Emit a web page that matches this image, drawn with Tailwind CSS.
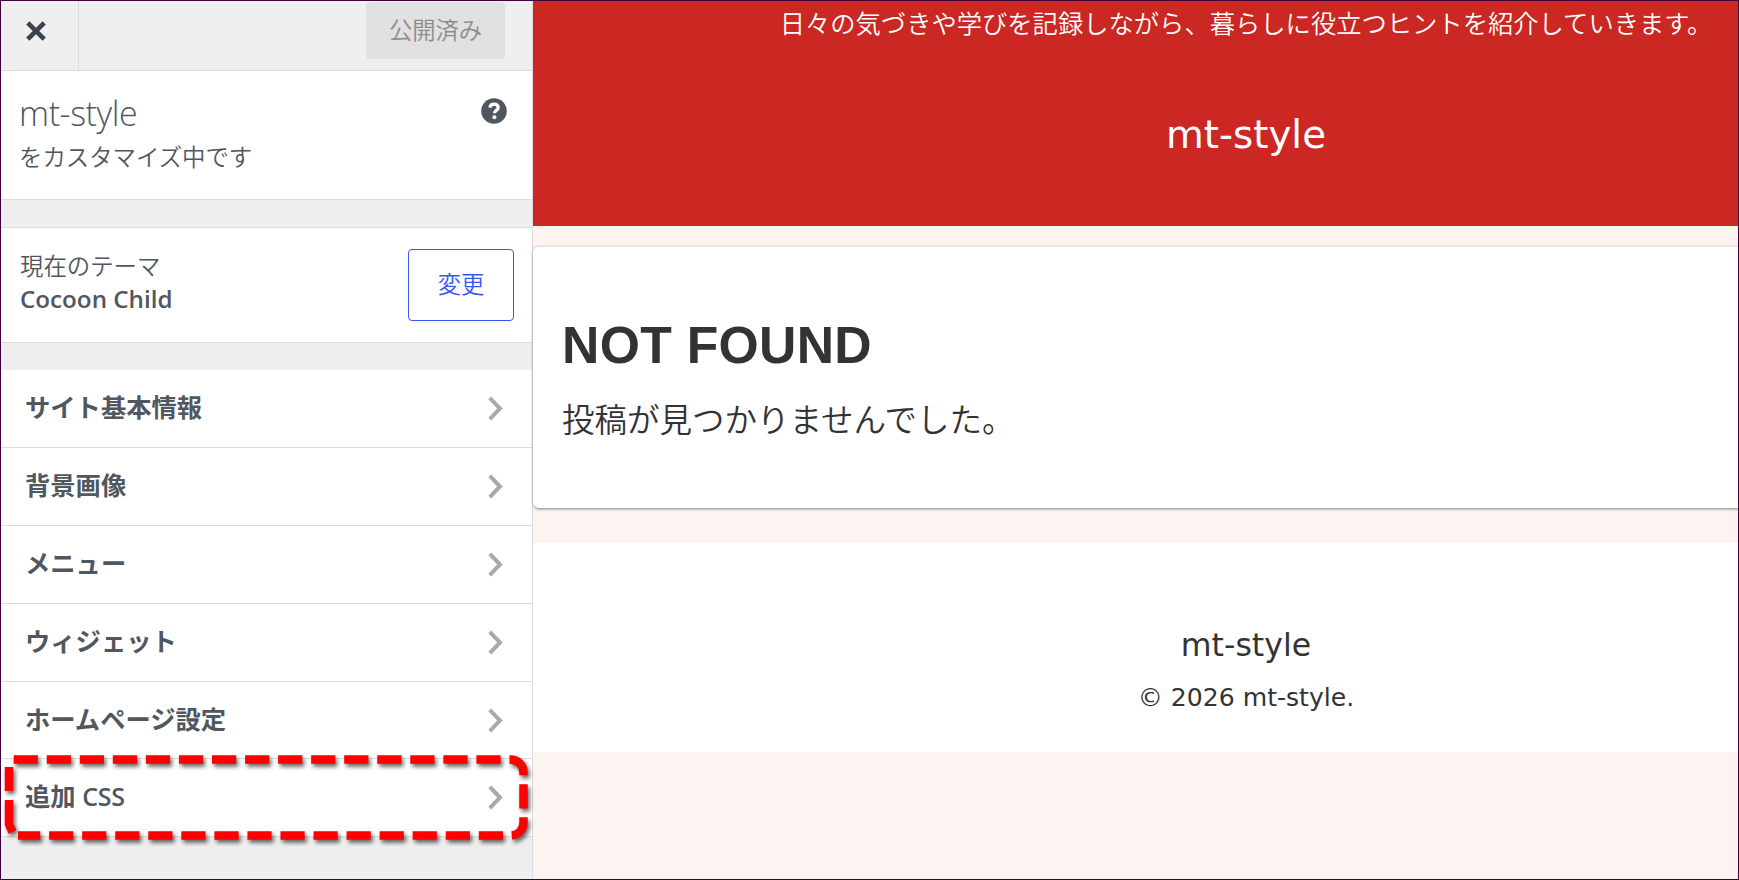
<!DOCTYPE html>
<html lang="ja">
<head>
    <meta charset="UTF-8">
    <meta name="viewport" content="width=device-width, initial-scale=1.0">
    <title>カスタマイズ: mt-style</title>
    <script src="https://cdn.jsdelivr.net/npm/@tailwindcss/browser@4"></script>
</head>
<body class="h-[880px] overflow-hidden">
<div class="relative flex h-[880px] w-[1739px] overflow-hidden border border-[#400040] font-['Open_Sans','Noto_Sans_CJK_JP',sans-serif] text-[#50575e]">

    <!-- Customizer sidebar -->
    <aside class="flex w-[532px] shrink-0 flex-col border-r border-[#dcdcde] bg-[#efefef]">
        <header class="flex h-[70px] shrink-0 items-start justify-between border-b border-[#dcdcde]">
            <button class="flex h-[69px] w-[78px] items-center justify-center border-r border-[#dcdcde] pr-[7px] pb-[9px]">
                <svg class="h-5 w-5" viewBox="0 0 20 20" fill="none" stroke="#3c434a" stroke-width="4.6"><path d="M1.8 1.8 18.2 18.2M18.2 1.8 1.8 18.2"/></svg>
            </button>
            <button class="mt-px mr-[27px] h-[57px] w-[139px] rounded-[4px] bg-[#e1e1e1] pb-px text-[23.3px] font-[350] text-[#8c8c8c]">公開済み</button>
        </header>

        <div class="flex h-[129px] shrink-0 justify-between border-b border-[#dcdcde] bg-white pl-[18px] pr-[25px]">
            <div class="pt-[20px]">
                <h1 class="text-[34px] leading-[44px] font-light tracking-[-0.4px]">mt-style</h1>
                <p class="text-[23.4px] leading-[44px] font-[350]">をカスタマイズ中です</p>
            </div>
            <svg class="mt-[27px] h-[26px] w-[26px]" viewBox="0 0 26 26">
                <circle cx="13" cy="13" r="12.8" fill="#50575e"/>
                <path d="M9 9.6C9.2 6.9 11 6.1 13.2 6.1c2.3 0 4 1.3 4 3.3 0 2.8-3.7 3-3.7 5.9" fill="none" stroke="#fff" stroke-width="3.3"/>
                <circle cx="13.4" cy="19.3" r="2" fill="#fff"/>
            </svg>
        </div>

        <div class="mt-[27px] flex h-[116px] shrink-0 items-center justify-between border-y border-[#dcdcde] bg-white pl-[19px] pr-[18px]">
            <div class="pb-[7px]">
                <p class="pt-px text-[23.4px] leading-[33px] font-[350]">現在のテーマ</p>
                <p class="text-[24.2px] leading-[32px] font-semibold">Cocoon Child</p>
            </div>
            <button class="h-[72px] w-[106px] rounded-[4px] border border-[#3858e9] pb-0.5 text-[23.3px] font-[350] text-[#3858e9]">変更</button>
        </div>

        <ul class="mt-[27px] shrink-0 text-[25.3px] font-bold">
            <li class="flex h-[78px] items-center justify-between border-b border-[#dcdcde] bg-white pl-[24px] pr-[29px] pb-px">サイト基本情報
                <svg class="h-[25px] w-[15px]" viewBox="0 0 15 25" fill="none" stroke="#a7aaad" stroke-width="4"><path d="M1.8 1.8 12 12.5 1.8 23.2"/></svg>
            </li>
            <li class="flex h-[78px] items-center justify-between border-b border-[#dcdcde] bg-white pl-[24px] pr-[29px] pb-px">背景画像
                <svg class="h-[25px] w-[15px]" viewBox="0 0 15 25" fill="none" stroke="#a7aaad" stroke-width="4"><path d="M1.8 1.8 12 12.5 1.8 23.2"/></svg>
            </li>
            <li class="flex h-[78px] items-center justify-between border-b border-[#dcdcde] bg-white pl-[24px] pr-[29px] pb-px">メニュー
                <svg class="h-[25px] w-[15px]" viewBox="0 0 15 25" fill="none" stroke="#a7aaad" stroke-width="4"><path d="M1.8 1.8 12 12.5 1.8 23.2"/></svg>
            </li>
            <li class="flex h-[78px] items-center justify-between border-b border-[#dcdcde] bg-white pl-[24px] pr-[29px] pb-px">ウィジェット
                <svg class="h-[25px] w-[15px]" viewBox="0 0 15 25" fill="none" stroke="#a7aaad" stroke-width="4"><path d="M1.8 1.8 12 12.5 1.8 23.2"/></svg>
            </li>
            <li class="flex h-[77px] items-center justify-between border-b border-[#dcdcde] bg-white pl-[24px] pr-[29px]">ホームページ設定
                <svg class="h-[25px] w-[15px]" viewBox="0 0 15 25" fill="none" stroke="#a7aaad" stroke-width="4"><path d="M1.8 1.8 12 12.5 1.8 23.2"/></svg>
            </li>
            <li class="flex h-[78px] items-center justify-between border-b border-[#dcdcde] bg-white pl-[24px] pr-[29px] pb-px">
                <span>追加 <span class="text-[25px] font-semibold tracking-[-0.3px]">CSS</span></span>
                <svg class="h-[25px] w-[15px]" viewBox="0 0 15 25" fill="none" stroke="#a7aaad" stroke-width="4"><path d="M1.8 1.8 12 12.5 1.8 23.2"/></svg>
            </li>
        </ul>
    </aside>

    <!-- Site preview, wider than the window -->
    <main class="w-[1426px] shrink-0 bg-[#fdf4f2] font-['DejaVu_Sans','Noto_Sans_CJK_JP',sans-serif] text-[#333]">
        <header class="h-[225px] bg-[#cb2723] text-center text-white">
            <p class="pt-px font-['Noto_Sans_CJK_JP'] text-[25.3px] leading-[40px] font-[350]">日々の気づきや学びを記録しながら、暮らしに役立つヒントを紹介していきます。</p>
            <h2 class="pt-[63px] text-[38.8px] leading-[60px]">mt-style</h2>
        </header>

        <section class="mt-[21px] h-[261px] rounded-[6px] bg-white pl-[29px] pt-[63px] shadow-[0_3px_2px_-2px_rgba(0,0,0,0.2),0_2px_3px_0_rgba(0,0,0,0.14),0_0_1px_2px_rgba(0,0,0,0.06)]">
            <h2 class="font-['Liberation_Sans'] text-[51.7px] leading-[70px] font-bold tracking-[0.3px]">NOT FOUND</h2>
            <p class="pt-[11px] font-['Noto_Sans_CJK_JP'] text-[32.5px] leading-[54px] font-[350]">投稿が見つかりませんでした。</p>
        </section>

        <footer class="mt-[35px] h-[209px] bg-white pt-[74px] text-center">
            <p class="text-[31.6px] leading-[56px]">mt-style</p>
            <p class="text-[25.1px] leading-[50px]">© 2026 mt-style.</p>
        </footer>
    </main>

    <!-- Highlight around the last menu item -->
    <svg class="pointer-events-none absolute top-[749px] left-0 h-[100px] w-[540px] drop-shadow-[2px_3px_2px_rgba(0,0,0,0.6)]" viewBox="1 750 540 100" fill="none" stroke="#ff0000" stroke-width="8.5">
        <path stroke-dasharray="24.2 8.85" d="M13.7 759.5H510.5A13 13 0 0 1 523.5 772.5V822.5A13 13 0 0 1 510.5 835.5H18"/>
        <path d="M12.5 832 9 824V800M9 791V767"/>
    </svg>
</div>
</body>
</html>
